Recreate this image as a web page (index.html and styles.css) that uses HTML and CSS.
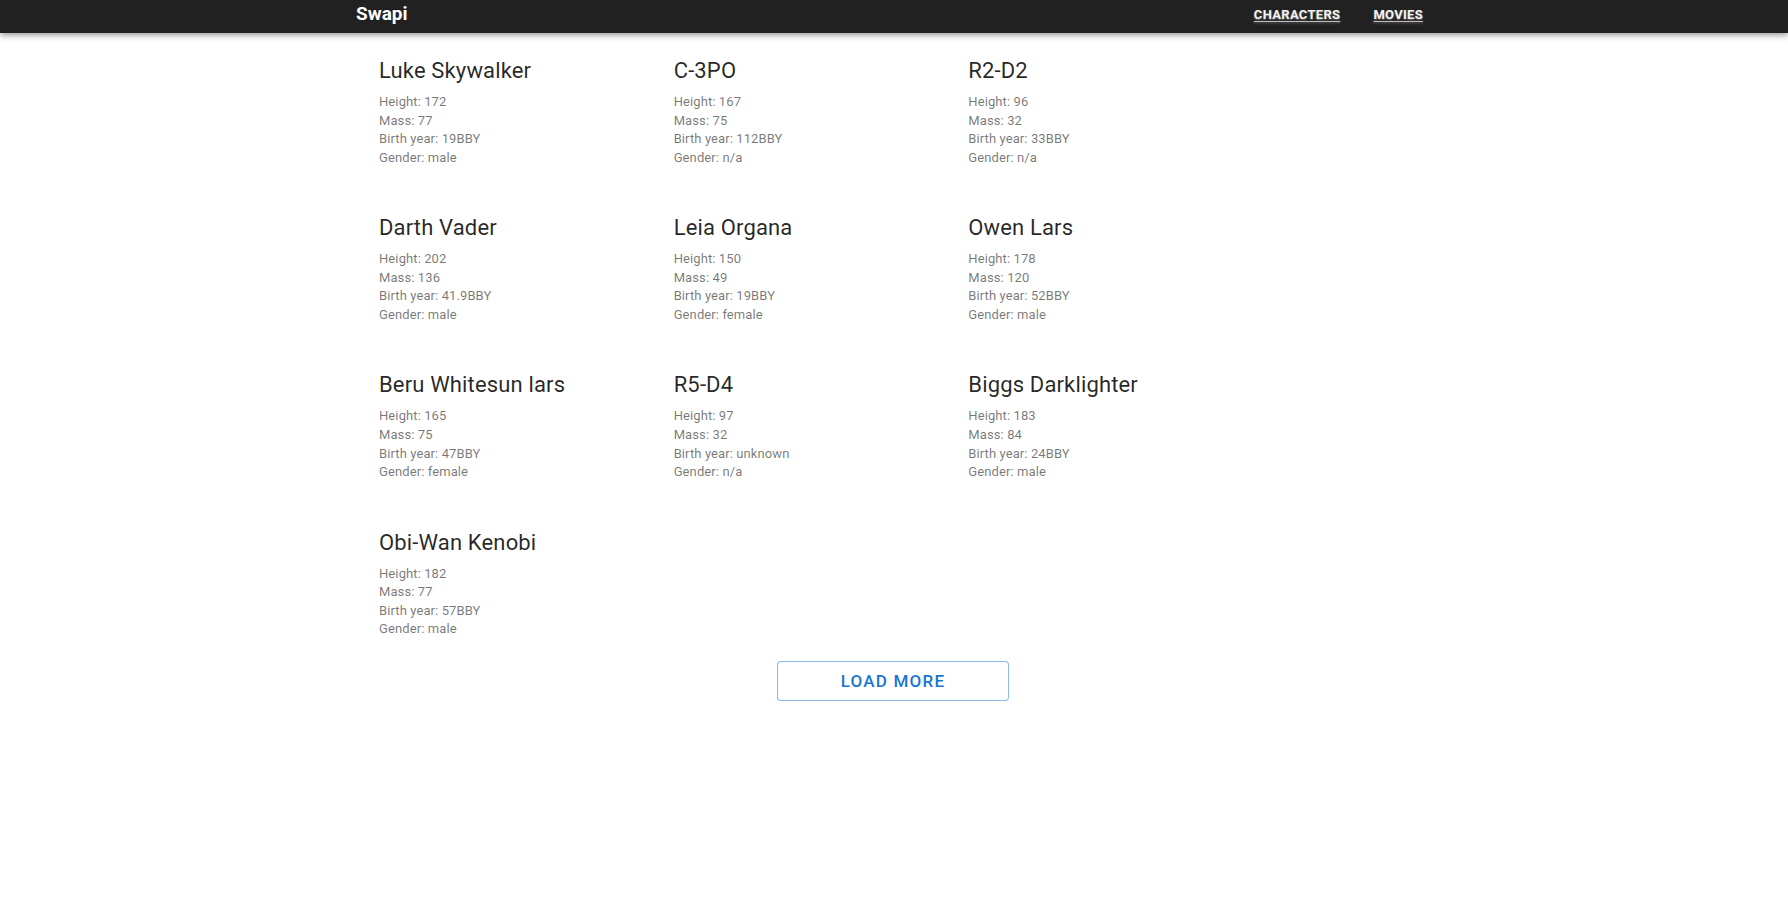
FILE: index.html
```html
<!DOCTYPE html>
<html lang="en">
<head>
<meta charset="utf-8">
<title>Swapi</title>
<link rel="stylesheet" href="styles.css">
</head>
<body>
<header class="appbar">
  <div class="appbar-inner">
    <div class="brand">Swapi</div>
    <nav class="nav">
      <a class="nav-link" href="#">CHARACTERS</a>
      <a class="nav-link" href="#">MOVIES</a>
    </nav>
  </div>
</header>
<main class="content">
  <div class="grid">
    <div class="card">
      <h2 class="name">Luke Skywalker</h2>
      <div class="details"><div>Height: 172</div><div>Mass: 77</div><div>Birth year: 19BBY</div><div>Gender: male</div></div>
    </div>
    <div class="card">
      <h2 class="name">C-3PO</h2>
      <div class="details"><div>Height: 167</div><div>Mass: 75</div><div>Birth year: 112BBY</div><div>Gender: n/a</div></div>
    </div>
    <div class="card">
      <h2 class="name">R2-D2</h2>
      <div class="details"><div>Height: 96</div><div>Mass: 32</div><div>Birth year: 33BBY</div><div>Gender: n/a</div></div>
    </div>
    <div class="card">
      <h2 class="name">Darth Vader</h2>
      <div class="details"><div>Height: 202</div><div>Mass: 136</div><div>Birth year: 41.9BBY</div><div>Gender: male</div></div>
    </div>
    <div class="card">
      <h2 class="name">Leia Organa</h2>
      <div class="details"><div>Height: 150</div><div>Mass: 49</div><div>Birth year: 19BBY</div><div>Gender: female</div></div>
    </div>
    <div class="card">
      <h2 class="name">Owen Lars</h2>
      <div class="details"><div>Height: 178</div><div>Mass: 120</div><div>Birth year: 52BBY</div><div>Gender: male</div></div>
    </div>
    <div class="card">
      <h2 class="name">Beru Whitesun lars</h2>
      <div class="details"><div>Height: 165</div><div>Mass: 75</div><div>Birth year: 47BBY</div><div>Gender: female</div></div>
    </div>
    <div class="card">
      <h2 class="name">R5-D4</h2>
      <div class="details"><div>Height: 97</div><div>Mass: 32</div><div>Birth year: unknown</div><div>Gender: n/a</div></div>
    </div>
    <div class="card">
      <h2 class="name">Biggs Darklighter</h2>
      <div class="details"><div>Height: 183</div><div>Mass: 84</div><div>Birth year: 24BBY</div><div>Gender: male</div></div>
    </div>
    <div class="card">
      <h2 class="name">Obi-Wan Kenobi</h2>
      <div class="details"><div>Height: 182</div><div>Mass: 77</div><div>Birth year: 57BBY</div><div>Gender: male</div></div>
    </div>
  </div>
  <div class="actions">
    <button class="load-more" type="button">LOAD MORE</button>
  </div>
</main>
</body>
</html>
```
FILE: styles.css
```css
* { box-sizing: border-box; }
html, body { margin: 0; padding: 0; background: #fff; }
body { font-family: Roboto, "Noto Sans", Arial, sans-serif; }

.appbar {
  height: 33px;
  background: #212121;
  box-shadow: 0 2px 4px -1px rgba(0,0,0,.2), 0 4px 5px 0 rgba(0,0,0,.14), 0 1px 10px 0 rgba(0,0,0,.12);
  position: relative;
  z-index: 1;
}
.appbar-inner {
  width: 1076px;
  margin: 0 auto;
  display: flex;
  justify-content: space-between;
  align-items: flex-start;
  height: 33px;
}
.brand {
  color: #fff;
  font-weight: 700;
  font-size: 19px;
  line-height: 28px;
}
.nav {
  display: flex;
  gap: 33px;
  margin-right: 9px;
}
.nav-link {
  color: #f2f2f2;
  font-size: 13px;
  font-weight: 700;
  line-height: 30px;
  letter-spacing: 0.3px;
  text-decoration: underline;
  text-decoration-color: #bdbdbd;
  text-underline-offset: 2px;
  text-shadow: 0 1px 2px rgba(255,255,255,.35);
}

.content {
  width: 1076px;
  margin: 0 auto;
  padding: 24px 0 0 23px;
}
.grid {
  display: grid;
  grid-template-columns: repeat(3, 294.67px);
  row-gap: 46.8px;
}
.name {
  margin: 0 0 8px;
  font-size: 22px;
  font-weight: 400;
  line-height: 28px;
  letter-spacing: 0.15px;
  color: rgba(0,0,0,.85);
}
.details {
  font-size: 13px;
  line-height: 18.6px;
  letter-spacing: 0.1px;
  color: rgba(0,0,0,.54);
}
.actions {
  display: flex;
  justify-content: center;
  margin: 21.7px 0 0 -25px;
}
.load-more {
  width: 232px;
  height: 40px;
  background: #fff;
  border: 1px solid rgba(25,118,210,.5);
  border-radius: 4px;
  color: #1976d2;
  font-family: Roboto, "Noto Sans", Arial, sans-serif;
  font-size: 17px;
  font-weight: 500;
  letter-spacing: 1.2px;
  cursor: pointer;
}
```
